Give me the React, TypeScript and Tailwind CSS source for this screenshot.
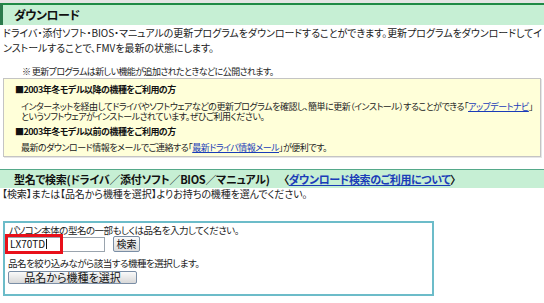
import React from 'react';

const jp = "font-['Noto_Sans_CJK_JP','Noto_Sans',sans-serif] [font-feature-settings:'palt']";

function Link({ children }: { children: React.ReactNode }) {
  return <span className="text-[#1a3cb8] underline">{children}</span>;
}

export default function App() {
  return (
    <div className={`w-[544px] h-[303px] overflow-hidden bg-white text-[#222] ${jp}`}>
      <div className="h-[3px] bg-[#e4e4e4]" />
      <div className="flex h-[22px] items-center border-t-2 border-l-[3px] border-t-[#1f8a45] border-l-[#2b7a4c] bg-[#c6efd4] pl-[11px]">
        <span className="text-[12px] font-bold tracking-[-0.5px] text-[#111]">ダウンロード</span>
      </div>

      <div className="pl-[3px] text-[10px] leading-[15px] tracking-[-0.05px] whitespace-nowrap">
        <p>ドライバ・添付ソフト・BIOS・マニュアルの更新プログラムをダウンロードすることができます。更新プログラムをダウンロードしてイ</p>
        <p>ンストールすることで、FMVを最新の状態にします。</p>
      </div>

      <p className="mt-[11px] pl-[22px] text-[9px] leading-[12px] tracking-[-0.6px] whitespace-nowrap">
        ※ 更新プログラムは新しい機能が追加されたときなどに公開されます。
      </p>

      <div className="mx-[3px] h-[79px] border border-[#c4c4c4] bg-[#ffffd9] px-[11px] pt-[5px] text-[9px] whitespace-nowrap shadow-[1px_1px_0_#e6e6e6]">
        <p className="font-bold leading-[12px] tracking-[-0.5px] text-[#111]">■2003年冬モデル以降の機種をご利用の方</p>
        <div className="mt-[6px] pl-[6px] leading-[10px] tracking-[-0.5px]">
          <p>
            インターネットを経由してドライバやソフトウェアなどの更新プログラムを確認し、簡単に更新（インストール）することができる「<Link>アップデートナビ</Link>」
          </p>
          <p>というソフトウェアがインストールされています。ぜひご利用ください。</p>
        </div>
        <p className="mt-[4px] font-bold leading-[12px] tracking-[-0.5px] text-[#111]">■2003年冬モデル以前の機種をご利用の方</p>
        <p className="mt-[5px] pl-[6px] leading-[10px] tracking-[-0.5px]">
          最新のダウンロード情報をメールでご連絡する「<Link>最新ドライバ情報メール</Link>」が便利です。
        </p>
      </div>

      <div className="mt-[12px] flex h-[19px] items-center border-t border-[#55a98a] bg-[#c6efd4] pl-[14px] whitespace-nowrap">
        <span className="text-[11px] font-bold tracking-[-0.3px] text-[#111]">型名で検索(ドライバ／添付ソフト／BIOS／マニュアル)</span>
        <span className="ml-[14px] text-[11px] font-bold tracking-[-0.4px] text-[#111]">
          〈<Link>ダウンロード検索のご利用について</Link>〉
        </span>
      </div>

      <p className="pl-[2px] text-[10px] leading-[12px] tracking-[-0.1px] whitespace-nowrap">
        【検索】または【品名から機種を選択】よりお持ちの機種を選んでください。
      </p>

      <div className="ml-[3px] mt-[21px] h-[75px] w-[431px] border-2 border-[#6cbcc9] pt-[1px] text-[9.5px] leading-[12px] whitespace-nowrap">
        <p className="pl-[4px] tracking-[-0.5px]">パソコン本体の型名の一部もしくは品名を入力してください。</p>
        <div className="flex items-center gap-[8px] pl-[2px]">
          <div className="relative">
            <div className="flex h-[15px] w-[98px] items-center border border-[#9aa4ae] bg-white pl-[2px] text-[10px] text-[#111]">
              LX70TD<span className="ml-px h-[10px] w-px bg-[#111]" />
            </div>
            <div className="absolute left-[-2px] top-[-3px] h-[20px] w-[58px] border-[3px] border-[#e8101a]" />
          </div>
          <button className="h-[16px] w-[27px] rounded-[2px] border border-[#7a8ea6] bg-gradient-to-b from-[#fafafa] to-[#dcdcdc] text-[10px] leading-[14px] text-[#111]">
            検索
          </button>
        </div>
        <p className="mt-[6px] pl-[3px] leading-[11px] tracking-[-0.5px]">品名を絞り込みながら該当する機種を選択します。</p>
        <button className="ml-[3px] mt-[2px] h-[13px] w-[129px] rounded-[2px] border border-[#7a8ea6] bg-gradient-to-b from-[#fafafa] to-[#d8d8d8] text-[11px] leading-[11px] text-[#111]">
          品名から機種を選択
        </button>
      </div>
    </div>
  );
}
